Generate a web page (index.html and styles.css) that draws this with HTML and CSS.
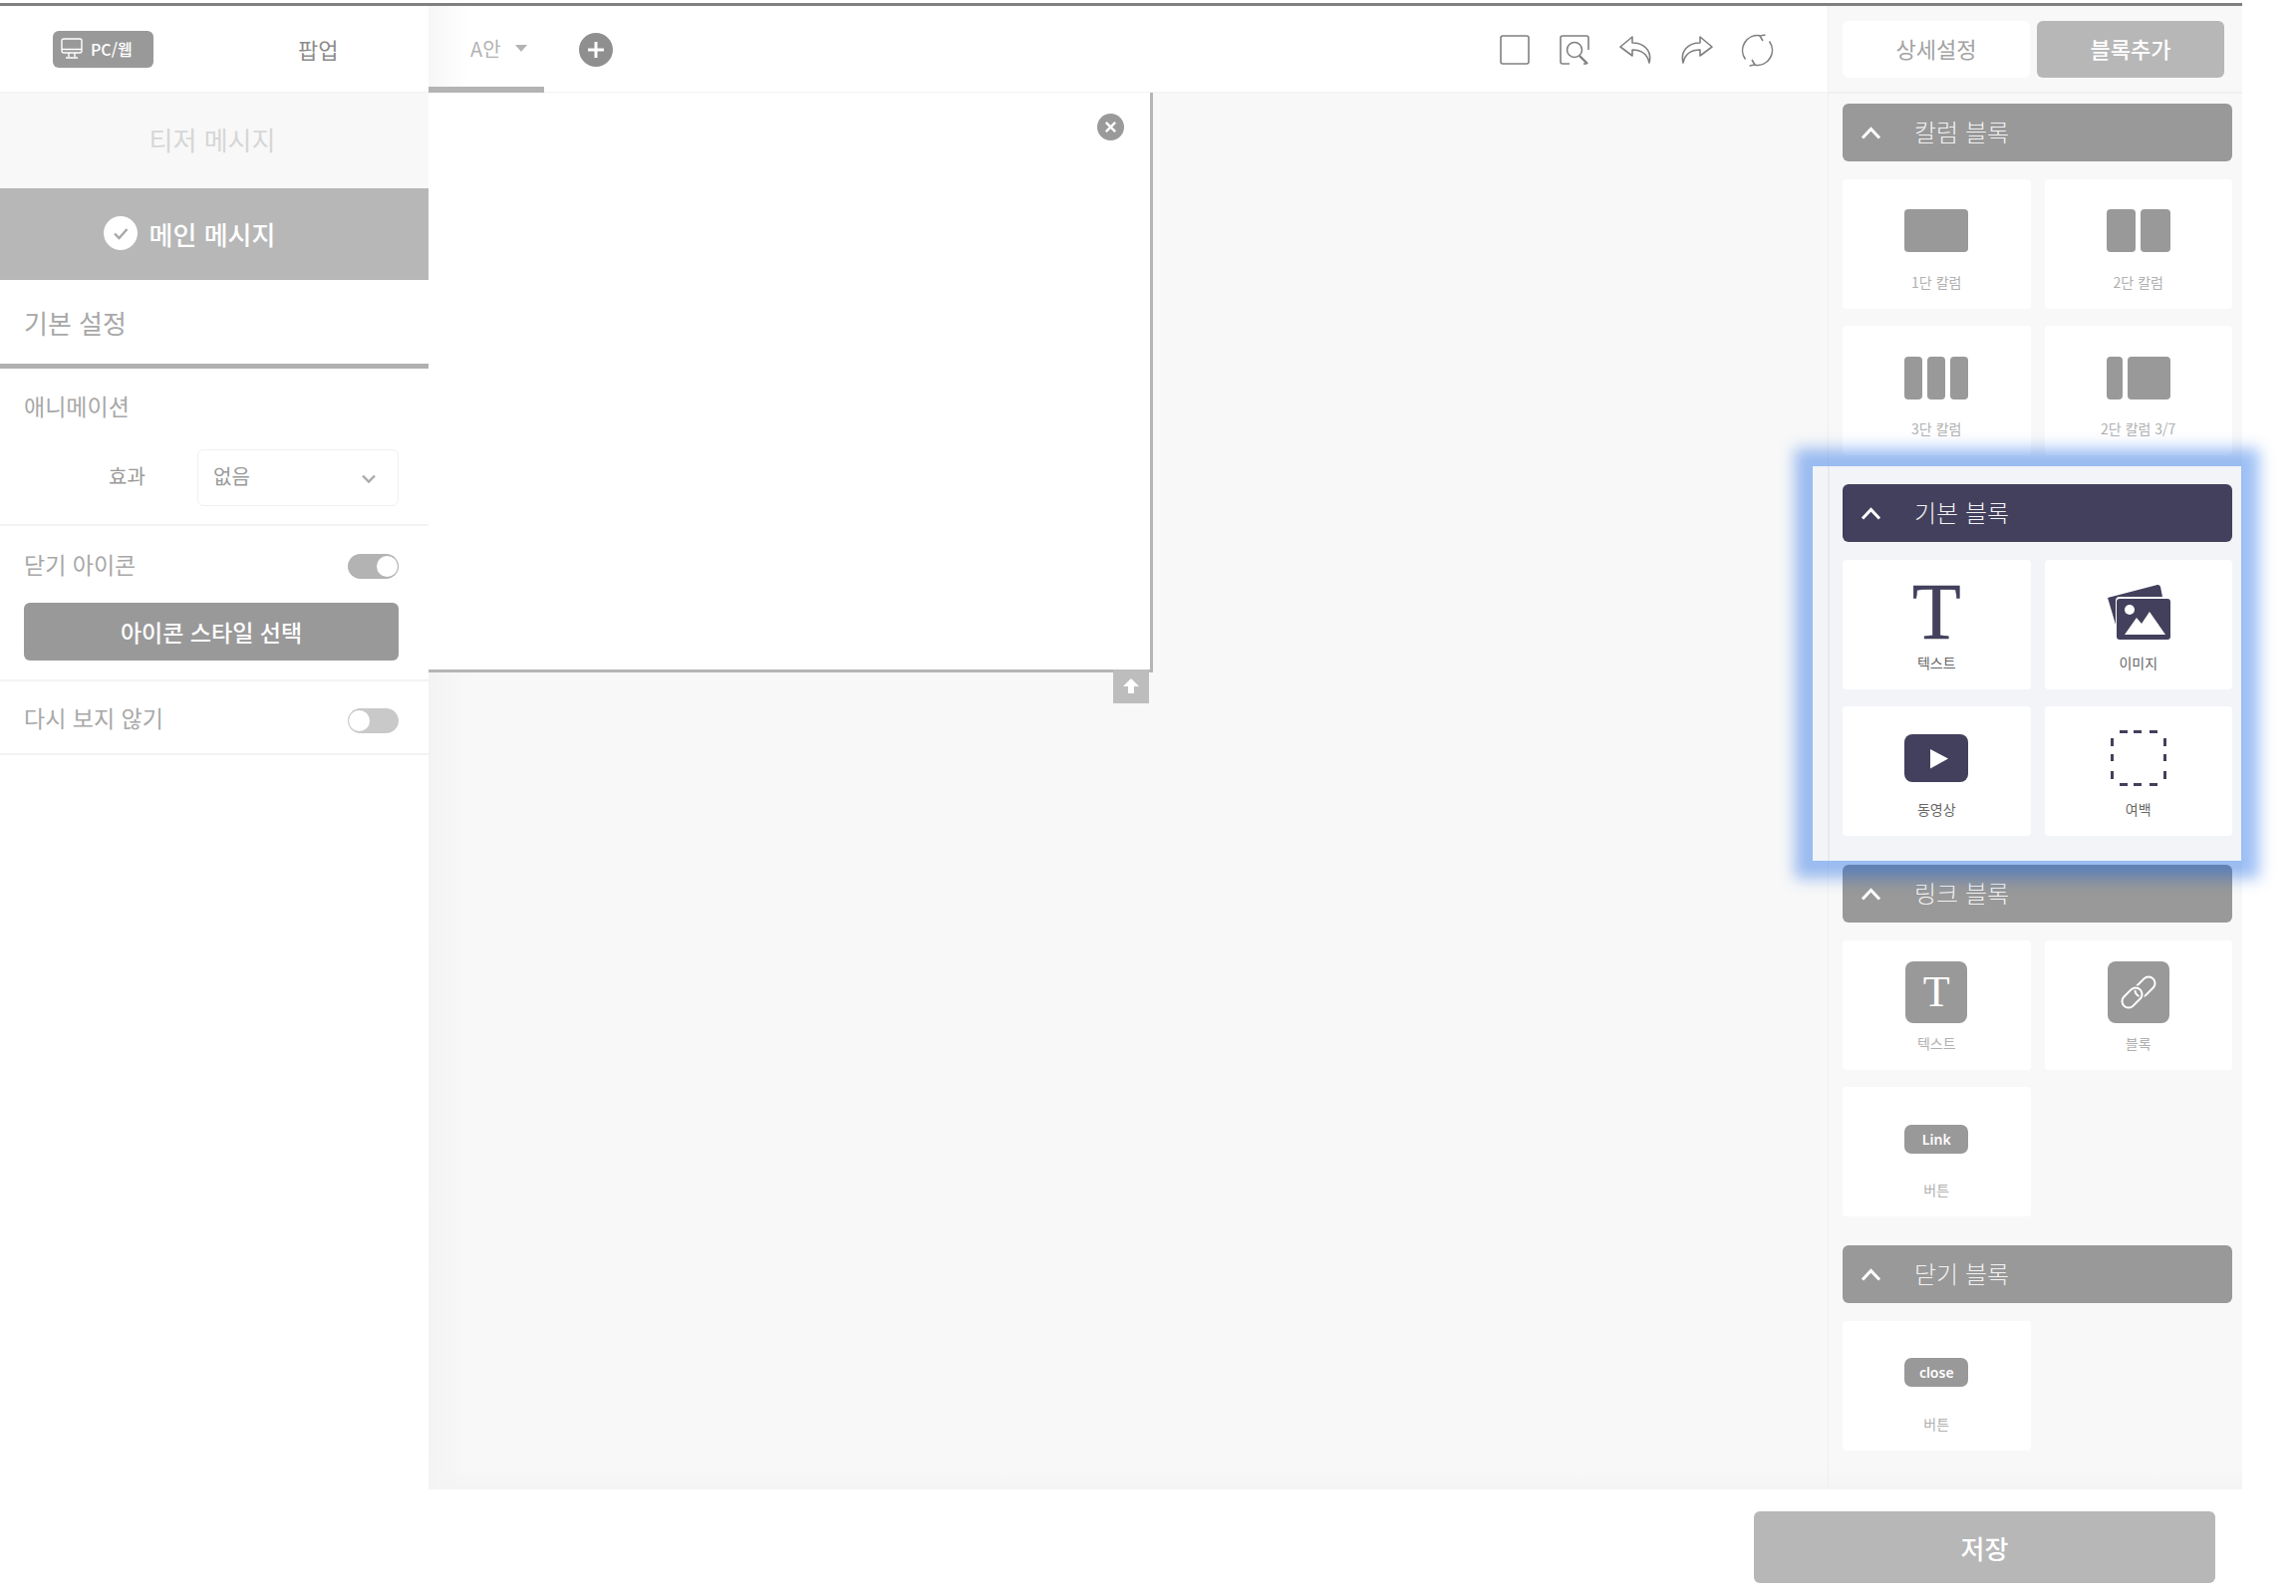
FILE: index.html
```html
<!DOCTYPE html>
<html lang="ko">
<head>
    <meta charset="UTF-8">
    <title>메시지 편집</title>
    <link rel="stylesheet" href="styles.css">
</head>
<body>

<div class="app">
    <div class="workspace">

        <!-- 왼쪽 설정 -->
        <div class="sidebar">
            <div class="side-head">
                <div class="device-badge">
                    <svg width="22" height="22" viewBox="0 0 22 22" fill="none" stroke="#fff" stroke-width="1.4"><rect x="1" y="1" width="20" height="14" rx="2"/><path d="M1 11.500h20M8 15v4M14 15v4M5 20h12"/></svg>
                    PC/웹
                </div>
                <div class="side-head-title">팝업</div>
            </div>
            <div class="msg-tab">티저 메시지</div>
            <div class="msg-tab active">
                <svg class="msg-check" width="34" height="34" viewBox="0 0 34 34"><circle cx="17" cy="17" r="17" fill="#fff"/><path d="M11 17.500l4.500 4.500 8-9" fill="none" stroke="#a8a8a8" stroke-width="2.400"/></svg>
                메인 메시지
            </div>
            <div class="side-title">기본 설정</div>

            <div class="side-group anim-group">
                <div class="group-label">애니메이션</div>
                <div class="field">
                    <span class="field-label">효과</span>
                    <div class="select">
                        없음
                        <svg width="16" height="10" viewBox="0 0 16 10" fill="none" stroke="#aaa" stroke-width="2.400"><path d="M2 1.500l6 6 6-6"/></svg>
                    </div>
                </div>
            </div>

            <div class="side-group close-group">
                <div class="toggle-row">
                    <span class="group-label">닫기 아이콘</span>
                    <span class="toggle on"></span>
                </div>
                <div class="style-btn">아이콘 스타일 선택</div>
            </div>

            <div class="side-group hide-group">
                <div class="toggle-row">
                    <span class="group-label">다시 보지 않기</span>
                    <span class="toggle"></span>
                </div>
            </div>
        </div>

        <!-- 가운데 캔버스 -->
        <div class="center">
            <div class="toolbar">
                <div class="variant-tab">A안 <i class="caret"></i></div>
                <div class="add-btn">
                    <svg width="34" height="34" viewBox="0 0 34 34"><circle cx="17" cy="17" r="17" fill="#8f8f8f"/><path d="M17 9v16M9 17h16" stroke="#fff" stroke-width="3"/></svg>
                </div>
                <div class="tools">
                    <svg class="tool-wide" width="30" height="30" viewBox="0 0 30 30" fill="none" stroke="#808080" stroke-width="1.600"><rect x="1" y="1" width="28" height="28" rx="2"/></svg>
                    <svg class="tool-wide" width="30" height="30" viewBox="0 0 30 30" fill="none" stroke="#808080" stroke-width="1.600"><path d="M10 29H3a2 2 0 0 1-2-2V3a2 2 0 0 1 2-2h24a2 2 0 0 1 2 2v12M24 29h3"/><circle cx="15" cy="15" r="7.500"/><path d="M20 21l8 8" stroke-width="2.400"/></svg>
                    <svg width="33" height="28" viewBox="0 0 33 28" fill="none" stroke="#808080" stroke-width="1.600" stroke-linejoin="round"><path d="M13 1L1 11l12 9v-6c9 0 15 4 17 13 3-12-5-20-17-20z"/></svg>
                    <svg width="33" height="28" viewBox="0 0 33 28" fill="none" stroke="#808080" stroke-width="1.600" stroke-linejoin="round"><path d="M20 1l12 10-12 9v-6C11 14 5 18 3 27 0 15 8 7 20 7z"/></svg>
                    <svg width="33" height="33" viewBox="0 0 33 33" fill="none" stroke="#808080" stroke-width="1.600"><path d="M19 1.800A15 15 0 0 0 4.500 25.500M14 31.200A15 15 0 0 0 28.500 7.500"/><path d="M24.500 1l-5.500 1 3 5M8.500 32l5.500-1-3-5"/></svg>
                </div>
            </div>
            <div class="stage">
                <div class="canvas">
                    <div class="canvas-close">
                        <svg width="27" height="27" viewBox="0 0 26 26"><circle cx="13" cy="13" r="13" fill="#9a9a9a"/><path d="M8.500 8.500l9 9M17.500 8.500l-9 9" stroke="#fff" stroke-width="2.400"/></svg>
                    </div>
                    <div class="canvas-top">
                        <svg width="18" height="18" viewBox="0 0 18 18"><path d="M9 1l8 8h-5v7H6V9H1z" fill="#fff"/></svg>
                    </div>
                </div>
            </div>
        </div>

        <!-- 오른쪽 블록 패널 -->
        <div class="panel">
            <div class="panel-tabs">
                <div class="panel-tab">상세설정</div>
                <div class="panel-tab active">블록추가</div>
            </div>

            <div class="block-section first">
                <div class="block-head">
                    <svg width="21" height="13" viewBox="0 0 21 13" fill="none" stroke="#fff" stroke-width="3"><path d="M2 11.500l8.500-9 8.500 9"/></svg>
                    칼럼 블록
                </div>
                <div class="block-grid">
                    <div class="block-card">
                        <div class="block-icon"><div class="cols"><b class="w1"></b></div></div>
                        <div class="block-name">1단 칼럼</div>
                    </div>
                    <div class="block-card">
                        <div class="block-icon"><div class="cols"><b class="w1"></b><b class="w1"></b></div></div>
                        <div class="block-name">2단 칼럼</div>
                    </div>
                    <div class="block-card">
                        <div class="block-icon"><div class="cols"><b class="w1"></b><b class="w1"></b><b class="w1"></b></div></div>
                        <div class="block-name">3단 칼럼</div>
                    </div>
                    <div class="block-card">
                        <div class="block-icon"><div class="cols"><b class="w3"></b><b class="w7"></b></div></div>
                        <div class="block-name">2단 칼럼 3/7</div>
                    </div>
                </div>
            </div>

            <div class="block-section focus">
                <div class="block-head">
                    <svg width="21" height="13" viewBox="0 0 21 13" fill="none" stroke="#fff" stroke-width="3"><path d="M2 11.500l8.500-9 8.500 9"/></svg>
                    기본 블록
                </div>
                <div class="block-grid">
                    <div class="block-card">
                        <div class="block-icon"><span class="serif-t">T</span></div>
                        <div class="block-name">텍스트</div>
                    </div>
                    <div class="block-card">
                        <div class="block-icon">
                            <svg width="64" height="56" viewBox="0 0 64 56"><path d="M1 14L51 1q2-.5 3 2l2 10H13q-4 0-4 4v24z" fill="#42405c"/><rect x="10" y="15" width="54" height="41" rx="3" fill="#42405c"/><circle cx="23" cy="26" r="5" fill="#fff"/><path d="M18 51l12-17 5 6 8-12 16 23z" fill="#fff"/></svg>
                        </div>
                        <div class="block-name">이미지</div>
                    </div>
                    <div class="block-card">
                        <div class="block-icon">
                            <svg width="64" height="48" viewBox="0 0 64 48"><rect width="64" height="48" rx="8" fill="#42405c"/><path d="M26 15l18 9.500-18 10z" fill="#fff"/></svg>
                        </div>
                        <div class="block-name">동영상</div>
                    </div>
                    <div class="block-card">
                        <div class="block-icon">
                            <svg width="56" height="56" viewBox="0 0 56 56" fill="none" stroke="#42405c" stroke-width="3"><path d="M9 1.500h8M23 1.500h8M39 1.500h8M9 54.500h8M23 54.500h8M39 54.500h8M1.500 8v8M1.500 24v7M1.500 41v8M54.500 8v8M54.500 24v7M54.500 41v8"/></svg>
                        </div>
                        <div class="block-name">여백</div>
                    </div>
                </div>
            </div>

            <div class="block-section">
                <div class="block-head">
                    <svg width="21" height="13" viewBox="0 0 21 13" fill="none" stroke="#fff" stroke-width="3"><path d="M2 11.500l8.500-9 8.500 9"/></svg>
                    링크 블록
                </div>
                <div class="block-grid">
                    <div class="block-card">
                        <div class="block-icon"><div class="icon-box"><span class="serif-t small">T</span></div></div>
                        <div class="block-name">텍스트</div>
                    </div>
                    <div class="block-card">
                        <div class="block-icon">
                            <div class="icon-box">
                                <svg width="38" height="38" viewBox="0 0 38 38" fill="none" stroke-width="2"><rect x="19" y="2" width="13" height="23" rx="6.500" stroke="#fff" transform="rotate(45 25.500 13.500)"/><rect x="6" y="13" width="13" height="23" rx="6.500" stroke="#999" stroke-width="5" transform="rotate(45 12.500 24.500)"/><rect x="6" y="13" width="13" height="23" rx="6.500" stroke="#fff" transform="rotate(45 12.500 24.500)"/></svg>
                            </div>
                        </div>
                        <div class="block-name">블록</div>
                    </div>
                    <div class="block-card">
                        <div class="block-icon"><div class="pill">Link</div></div>
                        <div class="block-name">버튼</div>
                    </div>
                </div>
            </div>

            <div class="block-section">
                <div class="block-head">
                    <svg width="21" height="13" viewBox="0 0 21 13" fill="none" stroke="#fff" stroke-width="3"><path d="M2 11.500l8.500-9 8.500 9"/></svg>
                    닫기 블록
                </div>
                <div class="block-grid">
                    <div class="block-card">
                        <div class="block-icon"><div class="pill">close</div></div>
                        <div class="block-name">버튼</div>
                    </div>
                </div>
            </div>
        </div>
    </div>

    <div class="footer">
        <div class="save-btn">저장</div>
    </div>
</div>

</body>
</html>
```

FILE: styles.css
```css
* {
    box-sizing: border-box;
}

body {
    margin: 0;
    background: #fff;
    font-family: "Noto Sans CJK KR", "Noto Sans", sans-serif;
    color: #999;
}

.app {
    width: 2250px;
    margin-top: 3px;
    border-top: 3px solid #808080;
}

.workspace {
    display: flex;
    height: 1489px;
}

/* sidebar */
.sidebar {
    width: 430px;
    flex-shrink: 0;
    background: #fff;
}

.side-head {
    display: flex;
    align-items: center;
    height: 87px;
    padding-left: 53px;
    border-bottom: 1px solid #f2f2f2;
}

.device-badge {
    display: flex;
    align-items: center;
    gap: 8px;
    width: 101px;
    height: 37px;
    padding-left: 8px;
    background: #999;
    border-radius: 6px;
    color: #fff;
    font-size: 16px;
    font-weight: 500;
}

.side-head-title {
    margin-left: 145px;
    font-size: 22px;
    color: #8c8c8c;
}

.msg-tab {
    display: flex;
    align-items: center;
    justify-content: center;
    height: 96px;
    padding: 0 4px 3px 0;
    background: #f8f8f8;
    font-size: 26px;
    color: #d6d6d6;
}

.msg-tab.active {
    height: 92px;
    padding-bottom: 2px;
    background: #b7b7b7;
    color: #fff;
    font-weight: 500;
}

.msg-check {
    margin-left: -46px;
    margin-right: 12px;
}

.side-title {
    display: flex;
    align-items: center;
    height: 89px;
    padding-left: 24px;
    border-bottom: 5px solid #b0b0b0;
    font-size: 26px;
    color: #a8a8a8;
}

.side-group {
    padding: 22px 30px 18px 24px;
    border-bottom: 2px solid #f3f3f3;
}

.group-label {
    font-size: 23px;
    line-height: 30px;
    color: #a8a8a8;
}

.field {
    display: flex;
    align-items: center;
    margin-top: 29px;
}

.field-label {
    width: 89px;
    margin-left: 85px;
    padding-bottom: 4px;
    font-size: 20px;
    color: #999;
}

.select {
    display: flex;
    align-items: center;
    justify-content: space-between;
    width: 202px;
    height: 57px;
    padding: 0 21px 4px 15px;
    border: 1px solid #f0f0f0;
    border-radius: 6px;
    font-size: 20px;
    color: #999;
}

.select svg {
    margin-top: 6px;
}

.close-group {
    padding-top: 25px;
    padding-bottom: 19px;
}

.hide-group {
    padding-top: 23px;
    padding-bottom: 19px;
}

.toggle-row {
    display: flex;
    align-items: center;
    justify-content: space-between;
}

.toggle-row .group-label {
    line-height: 26px;
    padding-bottom: 4px;
}

.toggle {
    position: relative;
    display: block;
    width: 51px;
    height: 25px;
    border-radius: 13px;
    background: #c9c9c9;
}

.toggle::after {
    content: "";
    position: absolute;
    top: 2px;
    left: 1px;
    width: 21px;
    height: 21px;
    border-radius: 50%;
    background: #fff;
}

.toggle.on {
    background: #b3b3b3;
}

.toggle.on::after {
    left: 29px;
}

.hide-group .toggle {
    margin-top: 2px;
}

.style-btn {
    display: flex;
    align-items: center;
    justify-content: center;
    height: 58px;
    margin-top: 22px;
    background: #999;
    border-radius: 6px;
    color: #fff;
    font-size: 23px;
    font-weight: 500;
}

/* center */
.center {
    flex: 1;
    display: flex;
    flex-direction: column;
    min-width: 0;
}

.toolbar {
    display: flex;
    align-items: flex-start;
    height: 87px;
    border-bottom: 1px solid #f2f2f2;
}

.variant-tab {
    display: flex;
    align-items: center;
    gap: 14px;
    width: 116px;
    height: 87px;
    padding: 4px 0 0 42px;
    border-bottom: 6px solid #b3b3b3;
    background: linear-gradient(to right, #f6f6f6, #fff 40px);
    font-size: 20px;
    color: #b3b3b3;
}

.caret {
    width: 0;
    height: 0;
    border-left: 6px solid transparent;
    border-right: 6px solid transparent;
    border-top: 7px solid #b3b3b3;
}

.add-btn {
    display: flex;
    margin: 27px 0 0 35px;
}

.tools {
    display: flex;
    align-items: center;
    gap: 28px;
    height: 30px;
    margin: 29px 0 0 auto;
    padding-right: 54px;
}

.tool-wide {
    margin-right: 2px;
}

.stage {
    flex: 1;
    background:
        linear-gradient(to top, #f4f4f4, rgba(248, 248, 248, 0) 20px),
        linear-gradient(to right, #f3f3f3, #f8f8f8 40px);
}

.canvas {
    position: relative;
    width: 727px;
    height: 582px;
    background: #fff;
    border-right: 3px solid #b5b5b5;
    border-bottom: 3px solid #b5b5b5;
}

.canvas-close {
    position: absolute;
    top: 21px;
    right: 26px;
    display: flex;
}

.canvas-top {
    position: absolute;
    top: 100%;
    right: 1px;
    display: flex;
    align-items: center;
    justify-content: center;
    width: 36px;
    height: 34px;
    background: #bdbdbd;
}

/* block panel */
.panel {
    width: 416px;
    flex-shrink: 0;
    background: linear-gradient(to top, #f4f4f4, #f8f8f8 20px);
    border-left: 1px solid #efefef;
}

.panel-tabs {
    display: flex;
    gap: 7px;
    height: 88px;
    padding: 15px 0 0 14px;
    border-bottom: 2px solid #efefef;
}

.panel-tab {
    display: flex;
    align-items: center;
    justify-content: center;
    width: 188px;
    height: 57px;
    padding-bottom: 4px;
    background: #fff;
    border-radius: 6px;
    font-size: 22px;
    color: #a3a3a3;
}

.panel-tab.active {
    background: #b7b7b7;
    color: #fff;
    font-weight: 500;
}

.block-section {
    position: relative;
    padding: 0 10px 29px 14px;
}

.block-section.first {
    margin-top: 10px;
}

.block-section.focus {
    z-index: 1;
}

.block-section.focus::before {
    content: "";
    position: absolute;
    z-index: -1;
    top: -18px;
    bottom: 4px;
    left: -16px;
    right: 1px;
    background: linear-gradient(to right, #f2f4f8 15px, #e8eaee 15px, #e8eaee 17px, #f2f4f8 17px);
    box-shadow: 0 0 14px 18px rgba(0, 90, 230, 0.38);
}

.block-head {
    display: flex;
    align-items: center;
    gap: 33px;
    height: 58px;
    padding: 0 0 4px 18px;
    background: #999;
    border-radius: 6px;
    color: #f2f2f2;
    font-size: 24px;
    font-weight: 300;
}

.block-head svg {
    margin-top: 4px;
}

.focus .block-head {
    background: #42405c;
}

.block-grid {
    display: grid;
    grid-template-columns: 1fr 1fr;
    gap: 17.5px 14px;
    margin-top: 17.5px;
}

.block-card {
    display: flex;
    flex-direction: column;
    align-items: center;
    height: 130px;
    padding-top: 12px;
    background: #fff;
    border-radius: 4px;
}

.block-icon {
    display: flex;
    align-items: center;
    justify-content: center;
    height: 80px;
}

.block-name {
    margin-top: -1px;
    font-size: 14px;
    line-height: 24px;
    color: #b0b0b0;
}

.focus .block-name {
    color: #666;
}

.cols {
    display: flex;
    gap: 5px;
    width: 64px;
    height: 43px;
}

.cols b {
    display: block;
    background: #999;
    border-radius: 4px;
}

.cols .w1 {
    flex: 1;
}

.cols .w3 {
    width: 16px;
}

.cols .w7 {
    flex: 1;
}

.serif-t {
    font-family: "Liberation Serif", serif;
    font-size: 80px;
    line-height: 76px;
    color: #42405c;
    -webkit-text-stroke: 0.5px #42405c;
}

.serif-t.small {
    font-size: 44px;
    line-height: 42px;
    color: #fff;
    -webkit-text-stroke: 0;
}

.icon-box {
    display: flex;
    align-items: center;
    justify-content: center;
    width: 62px;
    height: 62px;
    background: #999;
    border-radius: 8px;
}

.pill {
    display: flex;
    align-items: center;
    justify-content: center;
    width: 64px;
    height: 29px;
    background: #999;
    border-radius: 7px;
    color: #fff;
    font-family: "Noto Sans", sans-serif;
    font-size: 14px;
    font-weight: 600;
}

/* footer */
.footer {
    display: flex;
    justify-content: flex-end;
    padding: 22px 27px 0 0;
}

.save-btn {
    display: flex;
    align-items: center;
    justify-content: center;
    width: 463px;
    height: 72px;
    background: #b7b7b7;
    border-radius: 6px;
    color: #fff;
    font-size: 26px;
    font-weight: 500;
}
```
